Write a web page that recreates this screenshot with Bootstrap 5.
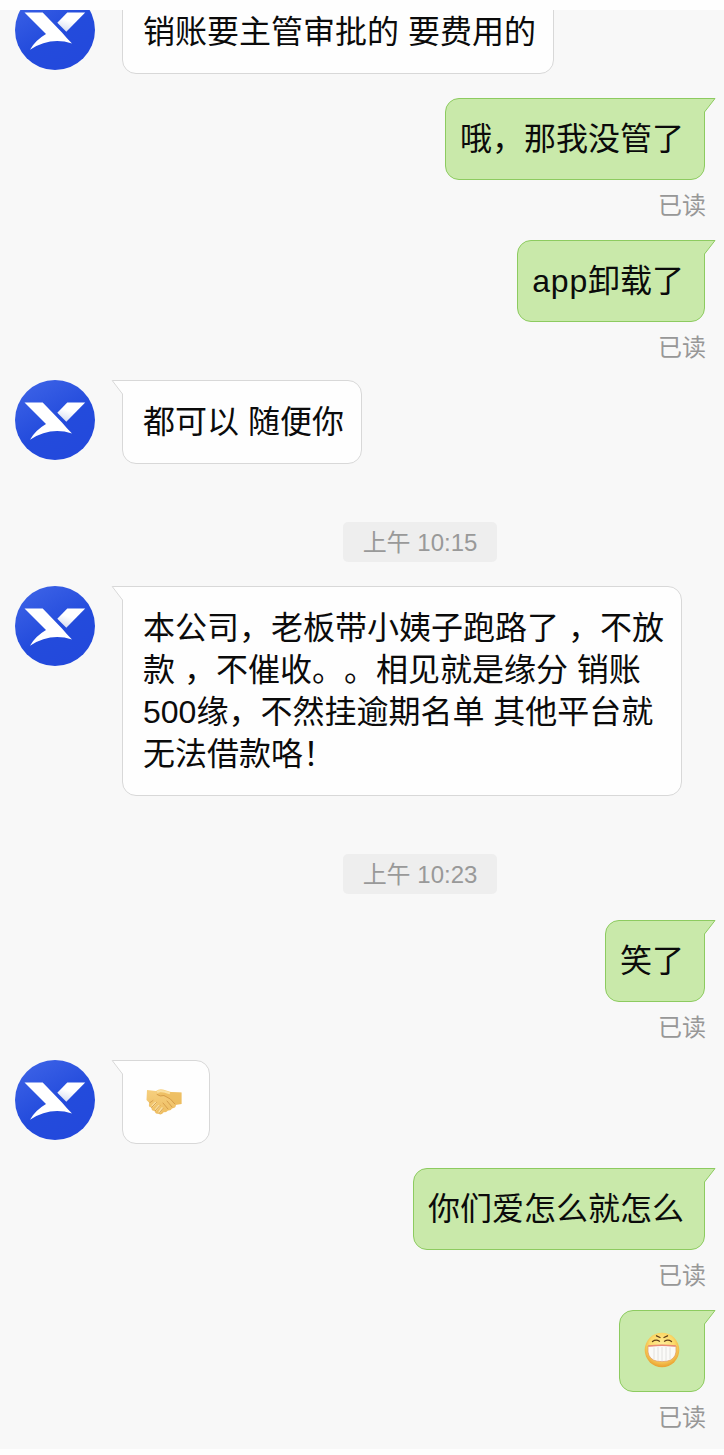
<!DOCTYPE html>
<html lang="zh-CN">
<head>
<meta charset="utf-8">
<meta name="viewport" content="width=device-width, initial-scale=1">
<title>聊天</title>
<link href="https://cdn.jsdelivr.net/npm/bootstrap@5.3.0/dist/css/bootstrap.min.css" rel="stylesheet">
<style>
  body { background: #fefefe; font-family: "Liberation Sans", "Noto Sans CJK SC", sans-serif; color: #0b0b0b; text-spacing-trim: space-all; font-feature-settings: "chws" 0, "halt" 0; }
  .chat { margin-top: 10px; height: 1439px; background: #f8f8f8; }
  .msg-in { margin-top: 22px; padding-left: 15px; gap: 27px; }
  .msg-in.first-msg { margin-top: -20px; }
  .msg-out { margin-top: 24px; padding-right: 19px; height: 118px; }
  .msg-in + .time-row { margin-top: 58px; }
  .time-row + .msg-in { margin-top: 24px; }
  .time-row + .msg-out { margin-top: 26px; }
  .avatar { width: 80px; height: 80px; flex: none; }
  .bubble { font-size: 32px; line-height: 42px; white-space: nowrap; border: 1px solid; border-radius: 14px; }
  .msg-in .bubble { background: #fefefe; border-color: #d8d8d8; border-top-left-radius: 0; padding: 20px 17px 20px 20px; }
  .msg-out .bubble { background: #c9e9aa; border-color: #8dcb60; border-top-right-radius: 0; height: 82px; flex: none; padding: 19px 20px 18px 14px; }
  .tail { top: -1px; width: 12px; height: 16px; }
  .msg-in .tail { left: -12px; }
  .msg-out .tail { right: -12px; }
  .receipt { font-size: 24px; line-height: 28px; margin-top: 12px; margin-right: -1px; color: #979797; }
  .time-row { padding-left: 343px; }
  .time-chip { width: 154px; height: 40px; line-height: 41px; font-size: 24px; background: #eee; color: #999; border-radius: 5px; }
  .msg-in .emoji-in { width: 88px; height: 84px; }
  .msg-out .emoji-out { width: 86px; padding: 0 0 2px; }
  .latin { letter-spacing: .8px; }
</style>
</head>
<body>
<svg width="0" height="0" class="position-absolute" aria-hidden="true">
  <defs>
    <linearGradient id="blue" x1="0" y1="0" x2=".6" y2="1"><stop stop-color="#4066e8"/><stop offset=".65" stop-color="#234bdc"/><stop offset="1" stop-color="#2349dc"/></linearGradient>
    <linearGradient id="wing" x1=".2" y1="1" x2=".65" y2=".1"><stop stop-color="#d3daf0"/><stop offset=".6" stop-color="#fff"/></linearGradient>
    <linearGradient id="hand" x1="0" y1="0" x2="0" y2="1"><stop stop-color="#f6d080"/><stop offset="1" stop-color="#eebd60"/></linearGradient>
    <radialGradient id="face" cx=".5" cy=".4" r=".58"><stop stop-color="#fff0a0"/><stop offset=".65" stop-color="#fbd968"/><stop offset="1" stop-color="#eba332"/></radialGradient>
    <symbol id="logo" viewBox="0 0 80 80">
      <circle cx="40" cy="40" r="40" fill="url(#blue)"/>
      <path fill="#fff" d="M9.500 22.500H27.700L47 42.500Q51 47.500 57 53.400Q35 46.500 15 59.700Q20 50.500 31 44Z"/>
      <path fill="url(#wing)" d="M52.300 22.500H70.200L51.300 41.700L42.300 32.700Z"/>
    </symbol>
    <symbol id="tail-in" viewBox="0 0 12 16">
      <path fill="#fefefe" d="M1 .5H12V15H11.500V14Z"/><path fill="none" stroke="#d8d8d8" d="M12 .5H1.200L11.500 14V16"/>
    </symbol>
    <symbol id="tail-out" viewBox="0 0 12 16">
      <path fill="#c9e9aa" d="M11 .5H0V15H.5V14Z"/><path fill="none" stroke="#8dcb60" d="M0 .5H11L.5 14V16"/>
    </symbol>
  </defs>
</svg>

<main class="chat overflow-hidden">
  <div class="msg-in first-msg d-flex align-items-start">
    <svg class="avatar"><use href="#logo"/></svg>
    <div class="bubble position-relative">销账要主管审批的 要费用的<svg class="tail position-absolute"><use href="#tail-in"/></svg></div>
  </div>

  <div class="msg-out d-flex flex-column align-items-end">
    <div class="bubble position-relative">哦，那我没管了<svg class="tail position-absolute"><use href="#tail-out"/></svg></div>
    <div class="receipt">已读</div>
  </div>

  <div class="msg-out d-flex flex-column align-items-end">
    <div class="bubble position-relative"><span class="latin">app</span>卸载了<svg class="tail position-absolute"><use href="#tail-out"/></svg></div>
    <div class="receipt">已读</div>
  </div>

  <div class="msg-in d-flex align-items-start">
    <svg class="avatar"><use href="#logo"/></svg>
    <div class="bubble position-relative">都可以 随便你<svg class="tail position-absolute"><use href="#tail-in"/></svg></div>
  </div>

  <div class="time-row d-flex"><div class="time-chip text-center">上午 10:15</div></div>

  <div class="msg-in d-flex align-items-start">
    <svg class="avatar"><use href="#logo"/></svg>
    <div class="bubble position-relative">本公司，老板带小姨子跑路了 ，不放<br>款 ，不催收<span>。</span><span class="d-inline-block">。</span>相见就是缘分 销账<br>500缘，不然挂逾期名单 其他平台就<br>无法借款咯！<svg class="tail position-absolute"><use href="#tail-in"/></svg></div>
  </div>

  <div class="time-row d-flex"><div class="time-chip text-center">上午 10:23</div></div>

  <div class="msg-out d-flex flex-column align-items-end">
    <div class="bubble position-relative">笑了<svg class="tail position-absolute"><use href="#tail-out"/></svg></div>
    <div class="receipt">已读</div>
  </div>

  <div class="msg-in d-flex align-items-start">
    <svg class="avatar"><use href="#logo"/></svg>
    <div class="bubble emoji-in position-relative d-flex align-items-center">
      <svg width="42" height="30" viewBox="0 0 42 30" role="img" aria-label="握手">
        <path fill="url(#hand)" d="M4 3L13 4Q16 1.500 20 2.500L28 5L38.500 5.500V17L33 18Q33 21 29 21.500Q28 24 25 23.500Q23 26 21 25Q18 29 15.500 26.500Q12 27.500 12 24Q8 24 8.500 20.500Q4.500 20 6.500 16L3.500 13Z"/>
        <path fill="#e9b654" d="M28 5L38.500 5.500V17L31 17Q27 11 20 9Q16 10 14 7.500L17 5.500Z" opacity=".55"/>
        <path fill="none" stroke="#fae0a0" stroke-width="2.200" stroke-linecap="round" d="M15 4.500Q18 3 26 6M9.500 19L12.500 16M13 22.500L16 19M16.500 25L19 21.500"/>
        <path fill="none" stroke="#cf9645" stroke-width=".8" stroke-linecap="round" d="M14 7.500Q17 10 21 8.500Q28 11 32 17M20 16L25 22M24 14L29 20M6.500 16L10 13.500M8.500 20.500L13.500 15.500M12 24L17 18.500M16 26.500L20 21.500"/>
      </svg>
      <svg class="tail position-absolute"><use href="#tail-in"/></svg>
    </div>
  </div>

  <div class="msg-out d-flex flex-column align-items-end">
    <div class="bubble position-relative">你们爱怎么就怎么<svg class="tail position-absolute"><use href="#tail-out"/></svg></div>
    <div class="receipt">已读</div>
  </div>

  <div class="msg-out d-flex flex-column align-items-end">
    <div class="bubble emoji-out position-relative d-flex justify-content-center align-items-center">
      <svg width="36" height="36" viewBox="0 0 36 36" role="img" aria-label="大笑">
        <circle cx="18" cy="18" r="17.300" fill="url(#face)"/>
        <path d="M4 14Q18 12.500 32 14V20Q31 27.500 23 29.200Q18 30 13 29.200Q5 27.500 4 20Z" fill="#fafaf8" stroke="#de935d" stroke-width=".7"/>
        <path d="M4.300 14Q18 12.500 31.700 14" fill="none" stroke="#e98a72" stroke-width="1.400"/>
        <path d="M10 15.500V27M14 15V29M18 15V29.500M22 15V29M26 15.500V27" stroke="#dcdad8" stroke-width=".8"/>
        <path d="M8.500 9.500Q12 7 15.500 9.200M20.500 9.200Q24 7 27.500 9.500M12.500 3.800L16 5.500M23.500 3.800L20 5.500" fill="none" stroke="#614018" stroke-width="1.300" stroke-linecap="round"/>
      </svg>
      <svg class="tail position-absolute"><use href="#tail-out"/></svg>
    </div>
    <div class="receipt">已读</div>
  </div>
</main>
<script src="https://cdn.jsdelivr.net/npm/bootstrap@5.3.0/dist/js/bootstrap.bundle.min.js"></script>
</body>
</html>
